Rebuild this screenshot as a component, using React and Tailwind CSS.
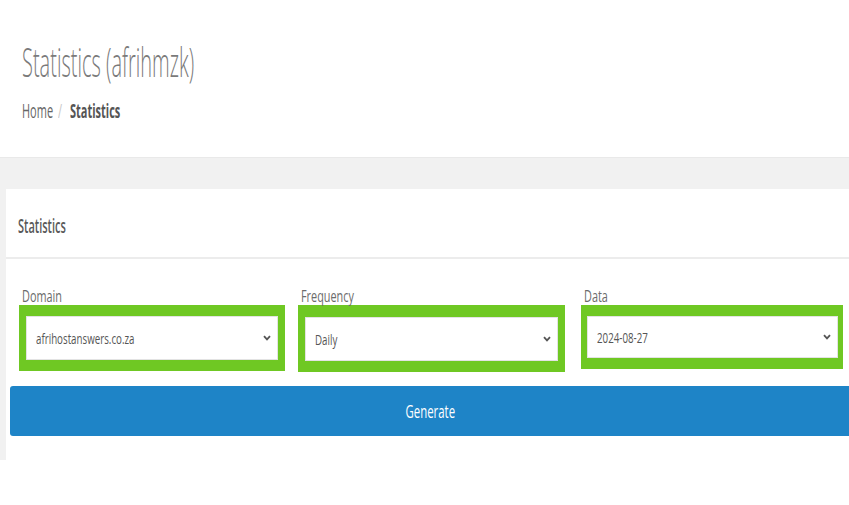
const SQ = 'inline-block origin-left scale-x-[0.55] whitespace-nowrap';

function Chevron() {
  return (
    <svg width="8" height="6" viewBox="0 0 8 6" className="shrink-0">
      <path d="M1 1.2 L4 4.4 L7 1.2" fill="none" stroke="#555" strokeWidth="1.8" />
    </svg>
  );
}

function Field({ label, value, boxClass, innerClass }) {
  return (
    <div className="flex flex-col">
      <div className="h-[22px] pl-[3px] text-[17px] leading-[26px] text-[#6b6b6b]">
        <span className="inline-block origin-left scale-x-[0.64] whitespace-nowrap">{label}</span>
      </div>
      <div className={`bg-[#6fc823] ${boxClass}`}>
        <div className={`bg-white border border-[#e3e3e3] flex items-center justify-between pl-[9px] pr-[6px] ${innerClass}`}>
          <span className="text-[15px] text-[#555] leading-none">
            <span className="inline-block origin-left scale-x-[0.65] whitespace-nowrap">{value}</span>
          </span>
          <Chevron />
        </div>
      </div>
    </div>
  );
}

export default function App() {
  return (
    <div className="w-[849px] h-[505px] overflow-hidden bg-white font-['Open_Sans',sans-serif]">
      <div className="h-[157px] pl-[22px] pt-[38px]">
        <h1 className="text-[40px] leading-[48px] font-light text-[#7a7a7a]">
          <span className="inline-block origin-left scale-x-[0.5] whitespace-nowrap">Statistics (afrihmzk)</span>
        </h1>
        <div className="mt-[12px] text-[20px] leading-[26px] text-[#666] flex items-center">
          <span className="w-[36px]"><span className={SQ}>Home</span></span>
          <span className="w-[12px] text-[#c8c8c8]"><span className={SQ}>/</span></span>
          <span className="font-bold text-[#555]"><span className={SQ}>Statistics</span></span>
        </div>
      </div>

      <div className="h-[303px] bg-[#f1f1f1] border-t border-[#e9e9e9] pl-[6px] pt-[31px]">
        <div className="w-[900px] h-full bg-white">
          <div className="h-[70px] border-b-2 border-[#ececec] pl-[12px] pt-[6px] flex items-center">
            <span className="text-[20px] font-semibold text-[#595959]">
              <span className={SQ}>Statistics</span>
            </span>
          </div>
          <div className="pt-[24px] flex">
            <div className="ml-[13px] w-[266px]">
              <Field label="Domain" value="afrihostanswers.co.za" boxClass="pl-[7px] pr-[7px] pt-[11px] pb-[11px]" innerClass="h-[44px]" />
            </div>
            <div className="ml-[13px] w-[267px]">
              <Field label="Frequency" value="Daily" boxClass="pl-[7px] pr-[7px] pt-[12px] pb-[11px]" innerClass="h-[44px]" />
            </div>
            <div className="ml-[16px] w-[262px]">
              <Field label="Data" value="2024-08-27" boxClass="pl-[6px] pr-[5px] pt-[11px] pb-[11px]" innerClass="h-[42px]" />
            </div>
          </div>
          <button className="mt-[14px] ml-[4px] w-[880px] h-[50px] bg-[#1e84c7] rounded-[3px] text-white text-[19px] flex items-center justify-center">
            <span className="pr-[40px]">
              <span className="inline-block whitespace-nowrap scale-x-[0.6]">Generate</span>
            </span>
          </button>
        </div>
      </div>
    </div>
  );
}
